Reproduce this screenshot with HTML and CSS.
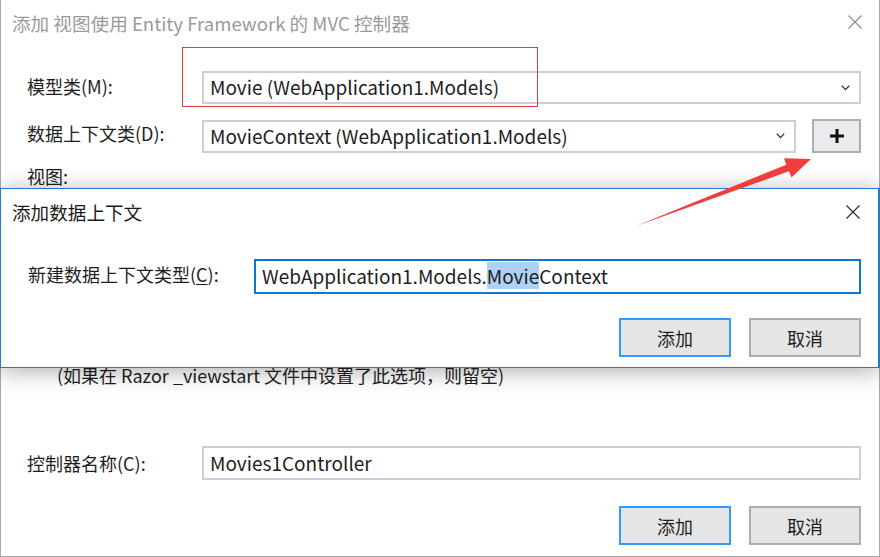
FILE: index.html
```html
<!DOCTYPE html>
<html lang="zh-CN">
<head>
<meta charset="utf-8">
<title>添加 视图使用 Entity Framework 的 MVC 控制器</title>
<link rel="stylesheet" href="styles.css">
</head>
<body>
<div class="dialog">
  <div class="titlebar">
    <span class="title">添加 视图使用 Entity Framework 的 MVC 控制器</span>
    <svg class="close close-inactive" width="14" height="14" viewBox="0 0 14 14"><path d="M0.5 0.5 L13.5 13.5 M13.5 0.5 L0.5 13.5" stroke="currentColor" stroke-width="1.1" fill="none"/></svg>
  </div>
  <div class="form">
    <div class="row row-model">
      <label class="lbl">模型类(M):</label>
      <div class="select">
        <span class="val">Movie (WebApplication1.Models)</span>
        <svg class="chev" width="9" height="6" viewBox="0 0 9 6"><path d="M0.8 0.8 L4.5 4.6 L8.2 0.8" stroke="#333" stroke-width="1.3" fill="none"/></svg>
      </div>
    </div>
    <div class="row row-ctx">
      <label class="lbl">数据上下文类(D):</label>
      <div class="select narrow">
        <span class="val">MovieContext (WebApplication1.Models)</span>
        <svg class="chev" width="9" height="6" viewBox="0 0 9 6"><path d="M0.8 0.8 L4.5 4.6 L8.2 0.8" stroke="#333" stroke-width="1.3" fill="none"/></svg>
      </div>
      <button class="plus" type="button"><svg width="16" height="16" viewBox="0 0 16 16"><path d="M8 1 V15 M1 8 H15" stroke="#111" stroke-width="3" fill="none"/></svg></button>
    </div>
    <div class="row row-view">
      <label class="lbl">视图:</label>
    </div>
    <div class="note">(如果在 Razor _viewstart 文件中设置了此选项，则留空)</div>
    <div class="row row-name">
      <label class="lbl">控制器名称(C):</label>
      <div class="textbox"><span class="val">Movies1Controller</span></div>
    </div>
    <div class="buttons">
      <button class="btn btn-default" type="button">添加</button>
      <button class="btn" type="button">取消</button>
    </div>
  </div>

  <div class="highlight"></div>

  <div class="subdialog">
    <div class="titlebar sub-titlebar">
      <span class="title sub-title">添加数据上下文</span>
      <svg class="close close-active" width="14" height="14" viewBox="0 0 14 14"><path d="M0.5 0.5 L13.5 13.5 M13.5 0.5 L0.5 13.5" stroke="currentColor" stroke-width="1.1" fill="none"/></svg>
    </div>
    <div class="sub-body">
      <div class="row row-new">
        <label class="lbl">新建数据上下文类型(<u>C</u>):</label>
        <div class="textbox focused"><span class="val">WebApplication1.Models.<span class="sel">Movie</span>Context</span></div>
      </div>
      <div class="buttons sub-buttons">
        <button class="btn btn-default" type="button">添加</button>
        <button class="btn" type="button">取消</button>
      </div>
    </div>
  </div>

  <svg class="arrow" width="880" height="557" viewBox="0 0 880 557">
    <polygon points="636,226 786.3,164.7 784,158.2 811,159 791.5,177.6 788.9,171.3" fill="#f23d3d"/>
  </svg>
</div>
</body>
</html>
```
FILE: styles.css
```css
* { box-sizing: border-box; }
html, body {
  margin: 0;
  padding: 0;
  background: #ffffff;
}
body {
  width: 880px;
  height: 557px;
  overflow: hidden;
  font-family: "Noto Sans CJK SC", "Noto Sans", sans-serif;
  color: #1e1e1e;
}
.dialog {
  position: relative;
  width: 880px;
  height: 557px;
  background: #fff;
  border-left: 1px solid #a8a8a8;
  border-right: 1px solid #a8a8a8;
  border-bottom: 1px solid #a8a8a8;
}
.titlebar {
  height: 44px;
  display: flex;
  align-items: center;
  justify-content: space-between;
  padding: 0 17px 0 11px;
}
.title {
  font-size: 18.6px;
  color: #9a9a9a;
  white-space: nowrap;
}
.close-inactive { color: #8c8c8c; }
.close-active { color: #2a2a2a; }

.form {
  display: flex;
  flex-direction: column;
  padding: 0 18px 0 26px;
}
.row {
  display: flex;
  align-items: center;
}
.lbl {
  font-size: 18px;
  white-space: nowrap;
  width: 175px;
  flex: none;
}
.row-model { margin-top: 27px; }
.row-model .lbl { position: relative; top: -2px; }
.row-ctx { margin-top: 15px; }
.row-ctx .lbl { position: relative; top: -3px; }
.row-view { margin-top: 10px; height: 26px; }
.row-view .lbl { line-height: 26px; }

.select, .textbox {
  flex: 1;
  height: 33px;
  border: 2px solid #cccedb;
  display: flex;
  align-items: center;
  justify-content: space-between;
  padding: 0 9px 0 6px;
  background: #fff;
}
.select.narrow { flex: none; width: 594px; }
.val {
  font-size: 19px;
  color: #1e1e1e;
  white-space: nowrap;
  position: relative;
  top: -1px;
}
.chev { flex: none; }

.plus {
  margin-left: 16px;
  width: 49px;
  height: 34px;
  border: 2px solid #adadad;
  background: #ebebef;
  display: flex;
  align-items: center;
  justify-content: center;
  padding: 0;
}

.note {
  margin-top: 173px;
  margin-left: 30px;
  font-size: 18px;
  height: 26px;
  line-height: 26px;
}
.row-name { margin-top: 58px; }
.row-name .textbox { height: 34px; }

.buttons {
  display: flex;
  justify-content: flex-end;
  gap: 18px;
  margin-top: 26px;
}
.btn {
  width: 112px;
  height: 39px;
  border: 2px solid #adadad;
  background: #e5e5e5;
  font-family: "Noto Sans CJK SC", sans-serif;
  font-size: 18px;
  color: #1e1e1e;
  padding: 0;
}
.btn-default { border-color: #3399ff; }

.highlight {
  position: absolute;
  left: 181px;
  top: 47px;
  width: 356px;
  height: 60px;
  border: 1px solid #e8383b;
}

.subdialog {
  position: absolute;
  left: -1px;
  top: 188px;
  width: 880px;
  height: 180px;
  background: #fff;
  border: 1px solid #1f7ad6;
  border-right-width: 2px;
  box-shadow: 0 3px 22px rgba(0, 0, 0, 0.33);
}
.sub-titlebar { height: 45px; padding: 0 18px 0 11px; }
.sub-title { color: #1a1a1a; }
.sub-body {
  display: flex;
  flex-direction: column;
  padding: 0 17px 0 27px;
}
.row-new { margin-top: 25px; }
.row-new .lbl { width: 226px; position: relative; top: -3px; }
.row-new u { text-decoration: underline; text-underline-offset: 2px; }
.textbox.focused {
  height: 35px;
  border-color: #0a78d4;
}
.sel { background: #add2f5; }
.sub-buttons { margin-top: 24px; }

.arrow {
  position: absolute;
  left: -1px;
  top: 0;
  pointer-events: none;
}
```
